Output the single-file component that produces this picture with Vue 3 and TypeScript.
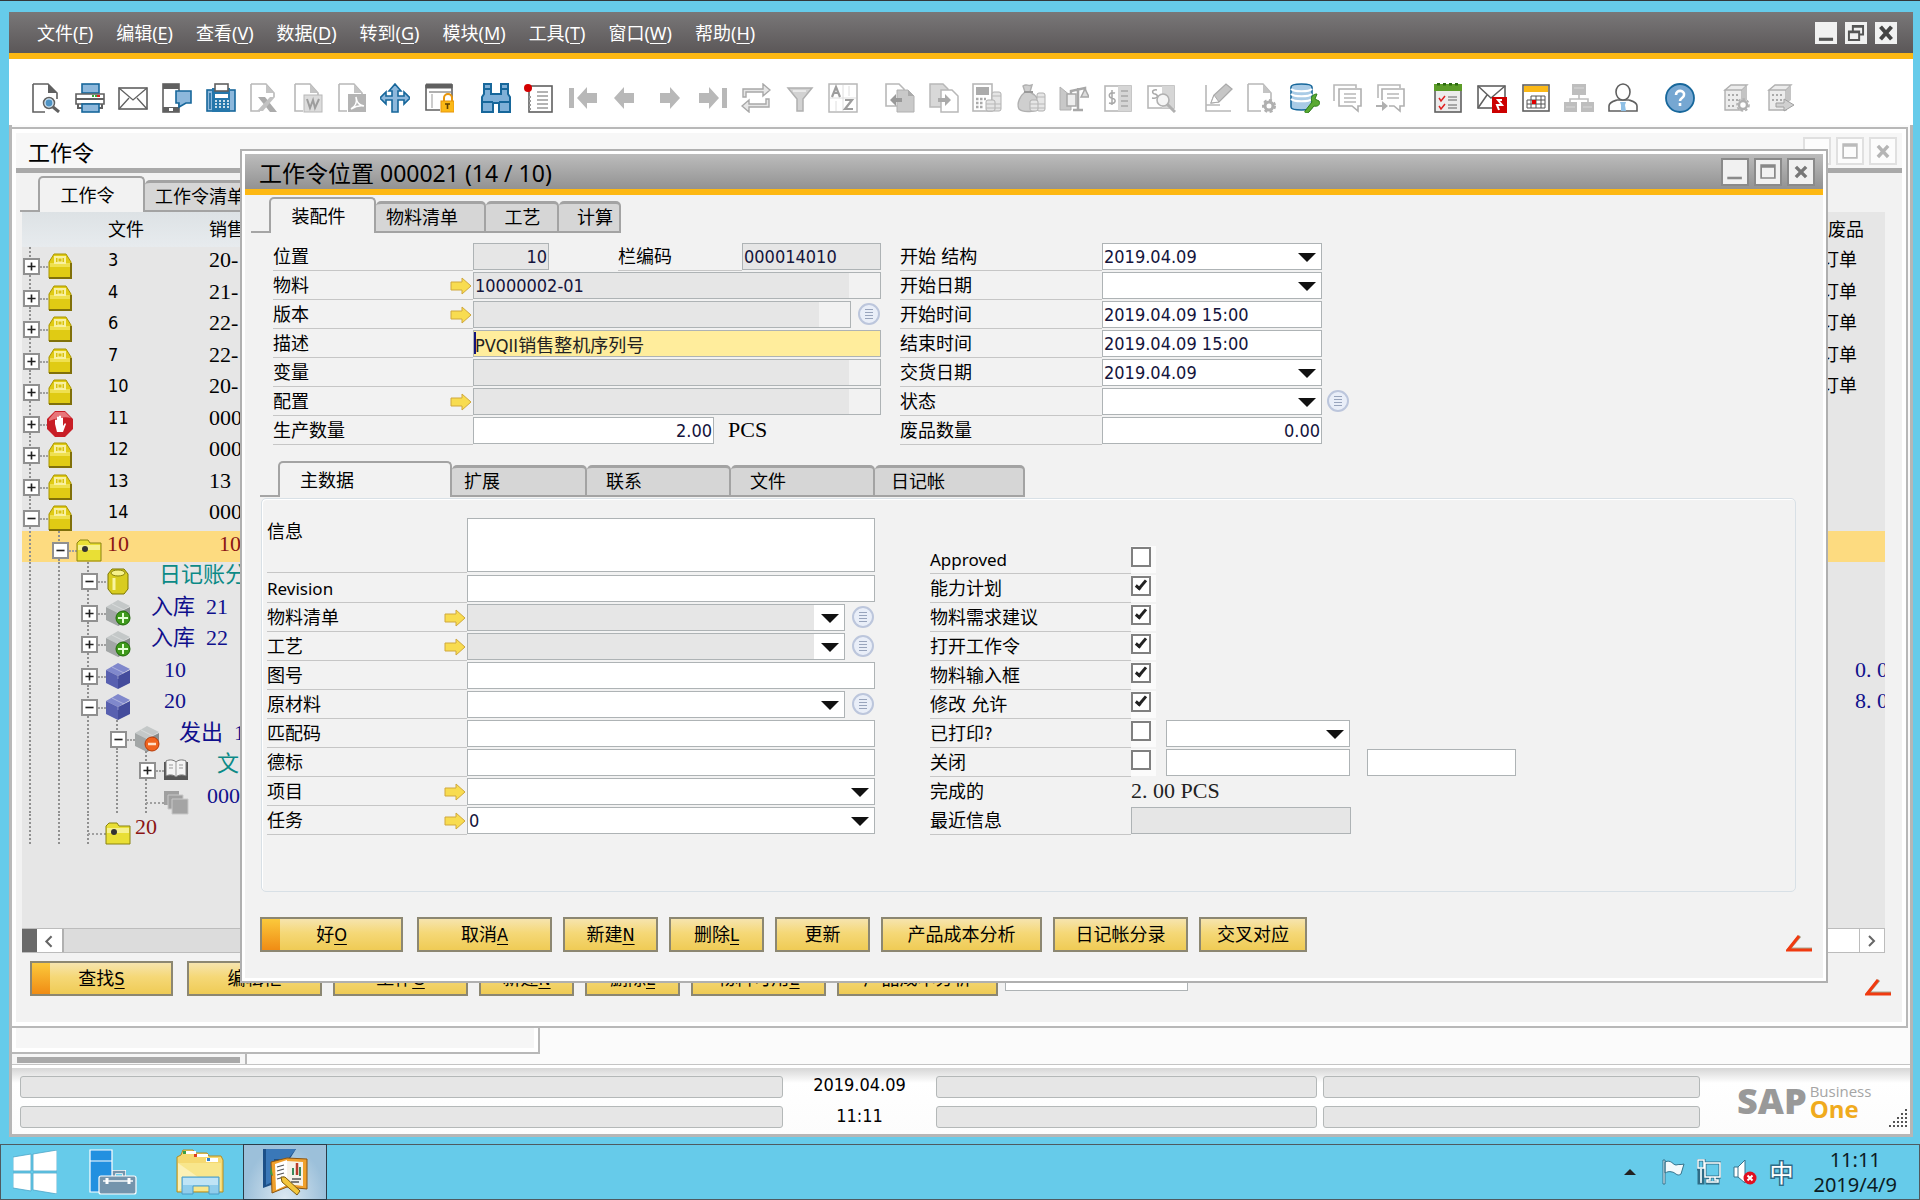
<script setup lang="ts">
interface TreeRow {
  guides: number[]
  level: number
  box: '+' | '-' | ''
  icon: string
  gap: number
  text: string
  tone: string
  second?: string
  shift?: number
  scrap?: string
  scrapTone?: string
}

interface Accel {
  text: string
  key?: string
  width: number
}

const menus = [
  ['文件', 'F'], ['编辑', 'E'], ['查看', 'V'], ['数据', 'D'], ['转到', 'G'],
  ['模块', 'M'], ['工具', 'T'], ['窗口', 'W'], ['帮助', 'H'],
]

const g = 'fill="none" stroke="#b8b8b8" stroke-width="1.6"'
const d = 'fill="#fff" stroke="#606060" stroke-width="1.6"'
const b = 'fill="#8db8dc" stroke="#17679b" stroke-width="1.6"'

const icons: Record<string, string> = {
  preview: `<path d="M2 1h15l9 9v6M2 1v28h12" ${d}/><path d="M17 1v9h9z" fill="#606060"/><circle cx="18" cy="20" r="5.5" fill="#cfe3f3" stroke="#606060" stroke-width="1.5"/><circle cx="18" cy="20" r="3.4" fill="#4e93c4"/><path d="M22 24l6 5" stroke="#606060" stroke-width="3"/>`,
  print: `<rect x="7" y="1" width="17" height="9" ${b}/><path d="M1 11h28v10H1z" ${d}/><path d="M1 16h28M3 21v4h4M27 21v4h-4" fill="none" stroke="#606060" stroke-width="2"/><path d="M17 13h2M20 13h2" stroke="#39a935" stroke-width="2"/><path d="M22 13h3" stroke="#e02020" stroke-width="2"/><rect x="7" y="21" width="17" height="8" ${b}/>`,
  mail: `<rect x="1" y="5" width="28" height="21" ${d}/><path d="M1 5l14 12L29 5M1 26l10-11M29 26L19 15" fill="none" stroke="#606060" stroke-width="1.3"/>`,
  phone: `<rect x="1" y="1" width="16" height="28" ${d}/><path d="M1 1h16v5H1zM1 24h16v5H1z" fill="#606060"/><rect x="7" y="25" width="4" height="3" fill="#fff"/><path d="M14 8h15v12h-5l-7 4v-4h-3z" ${b}/>`,
  fax: `<rect x="1" y="7" width="28" height="21" ${b}/><rect x="6" y="5" width="18" height="24" fill="#2577ab"/><rect x="9" y="1" width="13" height="7" ${d}/><rect x="9" y="11" width="13" height="4" fill="#fff"/><path d="M9 18h14M9 21h14M9 24h14" stroke="#fff" stroke-width="1.6" stroke-dasharray="2 2"/><path d="M4 10v16" stroke="#17679b" stroke-width="1.5"/>`,
  excel: `<path d="M2 1h15l8 9v4M2 1v27h9" ${g}/><path d="M17 1v9h8z" fill="#c4c4c4"/><path d="M9 14h7l12 15h-7z" fill="#ababab"/><path d="M26 14h-5L8 28h6z" fill="#c2c2c2"/>`,
  word: `<path d="M2 1h15l8 9v3M2 1v27h8" ${g}/><path d="M17 1v9h8z" fill="#c4c4c4"/><rect x="11" y="12" width="18" height="17" fill="#dcdcdc" stroke="#b8b8b8"/><path d="M14 16l3 9 3-8 2 8 4-9" fill="none" stroke="#9d9d9d" stroke-width="2"/>`,
  pdf: `<path d="M2 1h15l8 9v3M2 1v27h8" ${g}/><path d="M17 1v9h8z" fill="#c4c4c4"/><rect x="11" y="11" width="18" height="18" fill="#b4b4b4"/><path d="M14 26c5-3 6-8 5-12 1 6 3 8 8 9-5-1-8 0-13 3z" fill="none" stroke="#fff" stroke-width="1.5"/>`,
  move: `<path d="M15 1l6 7h-3v5h6v-4l6 6-6 6v-4h-6v12h-6V17H6v4l-6-6 6-6v4h6V8H9z" ${b}/>`,
  lock: `<path d="M2 2h26v13M2 2v25h14" ${d}/><path d="M2 1h26v4H2zM5 9h22" fill="#606060" stroke="#606060"/><path d="M8 11v14" stroke="#999"/><path d="M20 19v-4a4 4 0 0 1 8 0v4" fill="none" stroke="#e8960c" stroke-width="2"/><rect x="17" y="18" width="13" height="11" fill="#fbb917" stroke="#e8960c"/><path d="M21 21h5M23.500 21v5" stroke="#604000" stroke-width="1.6"/>`,
  find: `<path d="M3 1h7v10h10V1h7v10l2 3v15H18v-9h-6v9H1V14l2-3z" fill="#7fb0d8" stroke="#17679b" stroke-width="2"/><path d="M1 19h11M18 19h11M3 6h7M20 6h7" stroke="#17679b" stroke-width="2"/>`,
  note: `<rect x="5" y="3" width="23" height="26" ${d}/><path d="M13 9h11M13 13h11M13 17h11M13 21h11M13 25h11" stroke="#9a9a9a" stroke-width="1.3"/><path d="M6 13v15" stroke="#999" stroke-width="2" stroke-dasharray="2 2"/><circle cx="4" cy="5" r="4" fill="#d40000"/>`,
  first: `<path d="M1 5h5v20H1zM9 15L19 4v6h10v10H19v6z" fill="#b8b8b8"/>`,
  prev: `<path d="M3 15L13 4v6h10v10H13v6z" fill="#b8b8b8"/>`,
  next: `<path d="M25 15L15 4v6H5v10h10v6z" fill="#b8b8b8"/>`,
  last: `<path d="M24 5h5v20h-5zM21 15L11 4v6H1v10h10v6z" fill="#b8b8b8"/>`,
  refresh: `<path d="M2 14V6h20V1l7 6-7 6V9H5v5zM28 16v8H8v5l-7-6 7-6v4h17v-5z" fill="#e6e6e6" stroke="#a8a8a8" stroke-width="1.4"/>`,
  filter: `<path d="M3 5h24l-9 11v12h-6V16z" fill="#d2d2d2" stroke="#b0b0b0" stroke-width="1.5"/><path d="M8 8h13" stroke="#fff"/>`,
  sort: `<rect x="1" y="1" width="28" height="28" fill="#fff" stroke="#b8b8b8" stroke-width="1.5"/><path d="M15 2v26M2 15h26M21 3v10M8 18v10" stroke="#dedede"/><path d="M4 14L8 4l4 10M6 10h5M17 17h7l-7 9h8" fill="none" stroke="#9d9d9d" stroke-width="2.200"/>`,
  copyfrom: `<path d="M1 1h13l5 5v17H1z" ${g}/><path d="M12 7h11l6 6v16H12z" fill="#c9c9c9" stroke="#b0b0b0"/><path d="M23 7v6h6z" fill="#aaa"/><path d="M5 17l6-6v4h6v4h-6v4z" fill="#999"/>`,
  copyto: `<path d="M1 1h13l5 5v18H1z" fill="#d8d8d8" stroke="#b8b8b8" stroke-width="1.5"/><path d="M12 7h11l6 6v16H12z" fill="#fff" stroke="#b8b8b8" stroke-width="1.5"/><path d="M22 17l-6-6v4H9v4h7v4z" fill="#aaa"/>`,
  calc: `<rect x="1" y="1" width="19" height="27" ${g}/><rect x="4" y="4" width="13" height="8" fill="#ababab"/><path d="M4 16h10M4 20h8M4 24h8" stroke="#aaa" stroke-width="2.500" stroke-dasharray="2.500 1.500"/><rect x="20" y="9" width="9" height="19" rx="2" fill="#e4e4e4" stroke="#b0b0b0"/><rect x="14" y="17" width="9" height="11" rx="2" fill="#e4e4e4" stroke="#b0b0b0"/><path d="M20 13h9M14 21h15M14 25h15" stroke="#b8b8b8"/>`,
  bag: `<path d="M7 3c4-3 5 1 9-1l-2 7c6 3 11 9 9 16-2 4-16 5-20 1C0 20 5 12 9 9z" fill="#cfcfcf" stroke="#b0b0b0" stroke-width="1.4"/><path d="M8 9h9" stroke="#999" stroke-width="2"/><rect x="21" y="10" width="8" height="18" rx="2" fill="#e6e6e6" stroke="#b0b0b0"/><rect x="14" y="17" width="8" height="11" rx="2" fill="#e6e6e6" stroke="#b0b0b0"/><path d="M21 14h8M14 21h15M14 25h15" stroke="#b8b8b8"/>`,
  scale: `<path d="M1 4l11 9v14H1z" fill="#c8c8c8" stroke="#b0b0b0"/><rect x="8" y="11" width="9" height="12" fill="#eee" stroke="#a8a8a8" stroke-width="1.5"/><path d="M19 5v22M14 27h10M12 11V8l14-3v6" fill="none" stroke="#a8a8a8" stroke-width="2.500"/><path d="M22 14l4-8 4 8z" fill="#ddd" stroke="#a8a8a8" stroke-width="1.500"/>`,
  ledger: `<rect x="2" y="3" width="26" height="25" ${g}/><rect x="15" y="3" width="13" height="25" fill="#d6d6d6"/><path d="M18 8h7M18 13h7M18 18h7M18 23h7" stroke="#a8a8a8" stroke-width="1.5"/><path d="M12 10c-7-2-7 5-3 5 5 1 4 7-3 5M9 7v15" fill="none" stroke="#a8a8a8" stroke-width="1.5"/>`,
  lookup: `<rect x="2" y="3" width="26" height="22" ${g}/><rect x="16" y="3" width="12" height="22" fill="#d6d6d6"/><path d="M11 7c-6-1-5 4-2 4 4 1 3 5-3 4" fill="none" stroke="#a8a8a8" stroke-width="1.5"/><circle cx="17" cy="17" r="6" fill="#f5f5f5" stroke="#b0b0b0" stroke-width="1.6"/><path d="M21 21l8 8" stroke="#b0b0b0" stroke-width="3"/>`,
  pencil: `<path d="M3 2v26h25M3 22h14" ${g}/><path d="M8 20l3-8L23 1l6 5-13 13z" fill="#c6c6c6" stroke="#aaa" stroke-width="1.3"/><path d="M8 20l3-8 5 7z" fill="#fff" stroke="#aaa"/>`,
  docgear: `<path d="M2 1h15l8 9v8M2 1v27h13" ${g}/><path d="M17 1v9h8z" fill="#c4c4c4"/><circle cx="23" cy="23" r="4" fill="#fff" stroke="#b0b0b0" stroke-width="3"/><circle cx="23" cy="23" r="6" fill="none" stroke="#b0b0b0" stroke-width="2" stroke-dasharray="3 2.500"/>`,
  db: `<path d="M1 4c0-4 21-4 21 0v20c0 4-21 4-21 0z" fill="#a9cbe6" stroke="#17679b" stroke-width="1.6"/><path d="M1 6c3 3 18 3 21 0M1 11c3 3 18 3 21 0M1 16c3 3 18 3 21 0" fill="none" stroke="#fff" stroke-width="2"/><path d="M15 28l7-9c-2-5 1-8 5-8l-2 5 4 2c2 4-2 6-5 5l-5 6c-2 2-5 1-4-1z" fill="#5aaa32" stroke="#2e7d1a"/>`,
  chat: `<path d="M1 18V2h22v3" ${g}/><path d="M6 6h22v17h-3v5l-6-5H6z" fill="#fff" stroke="#b0b0b0" stroke-width="1.6"/><path d="M11 11h12M11 15h12M11 19h12" stroke="#b8b8b8" stroke-width="1.4"/>`,
  chatgo: `<path d="M2 15V2h22v3" ${g}/><path d="M6 17V6h22v17h-4v5l-6-5h-5" fill="#fff" stroke="#b0b0b0" stroke-width="1.6"/><path d="M11 11h12M11 15h12" stroke="#b8b8b8" stroke-width="1.4"/><path d="M0 22h6v-4l6 5-6 5v-4H0z" fill="#b0b0b0"/>`,
  tasks: `<rect x="2" y="3" width="26" height="26" fill="#ececec" stroke="#606060" stroke-width="1.6"/><path d="M1 1h28v7H1z" fill="#5c9c28"/><path d="M4 1h24" stroke="#2c6a10" stroke-width="3" stroke-dasharray="3 3"/><path d="M6 15l2 3 4-5M6 23l2 3 4-5" fill="none" stroke="#e02020" stroke-width="1.5"/><path d="M15 14h9M15 17h9M15 22h9M15 25h9" stroke="#909090" stroke-width="1.3"/>`,
  mailred: `<rect x="1" y="3" width="27" height="22" ${d}/><path d="M1 3l13 12L28 3M1 25l9-13" fill="none" stroke="#606060" stroke-width="1.5"/><rect x="15" y="14" width="15" height="16" fill="#cc0000"/><path d="M25 17h-4l4 5h-5l2 5" fill="none" stroke="#fff" stroke-width="2"/>`,
  calendar: `<rect x="2" y="2" width="26" height="26" ${d}/><path d="M3 3h24v6H3z" fill="#fbb917"/><path d="M6 17h18M6 21h18M6 25h18M10 13v12M15 13v12M20 13v12M24 13v12M6 17v8M10 13h14" stroke="#555" fill="none"/><rect x="11" y="17" width="4" height="4" fill="#e00000"/>`,
  org: `<path d="M8 1h14v11H8zM0 19h13v10H0zM17 19h13v10H17z" fill="#bebebe"/><path d="M15 12v4M6 20v-4h18v4" fill="none" stroke="#bebebe" stroke-width="1.6"/><path d="M10 5h10M2 24h9M19 24h9" stroke="#d8d8d8"/>`,
  user: `<path d="M1 28v-5c0-4 5-5 8-6h12c3 1 8 2 8 6v5z" ${d}/><ellipse cx="15" cy="9" rx="7" ry="8" ${d}/><path d="M12 19h6l-1 3 1 6h-5l0-6z" fill="#8fc0e6"/>`,
  help: `<circle cx="15" cy="15" r="14" fill="#76a7d2" stroke="#17679b" stroke-width="1.8"/><path d="M11 12c0-6 9-5 8 0 0 3-4 3-4 6M15 20v3" fill="none" stroke="#fff" stroke-width="2.600"/>`,
  server: `<path d="M3 7l6-5h16l-5 5zM3 7h17v20H3z" fill="#ececec" stroke="#b0b0b0" stroke-width="1.4"/><path d="M20 7l5-5v15l-5 4z" fill="#c4c4c4"/><path d="M6 12h12M6 17h12M6 23h8" stroke="#aaa" stroke-width="2" stroke-dasharray="2 2"/><circle cx="21" cy="22" r="4" fill="#fff" stroke="#b0b0b0" stroke-width="2.500"/><circle cx="21" cy="22" r="6" fill="none" stroke="#b0b0b0" stroke-width="1.600" stroke-dasharray="2.500 2"/>`,
  servergo: `<path d="M3 7l6-5h16l-5 5zM3 7h17v20H3z" fill="#ececec" stroke="#b0b0b0" stroke-width="1.4"/><path d="M20 7l5-5v15l-5 4z" fill="#c4c4c4"/><path d="M6 12h12M6 17h12" stroke="#aaa" stroke-width="2" stroke-dasharray="2 2"/><path d="M10 20h8v-4l10 6-10 6v-4h-8z" fill="#d0d0d0" stroke="#a0a0a0"/>`,
}

const toolbar = [
  { width: 423, items: ['preview', 'print', 'mail', 'phone', 'fax', 'excel', 'word', 'pdf', 'move', 'lock'] },
  { width: 377, items: ['find', 'note', 'first', 'prev', 'next', 'last', 'refresh', 'filter', 'sort'] },
  { width: 291, items: ['copyfrom', 'copyto', 'calc', 'bag', 'scale', 'ledger', 'lookup'] },
  { width: 203, items: ['pencil', 'docgear', 'db', 'chat', 'chatgo'] },
  { width: 205, items: ['tasks', 'mailred', 'calendar', 'org', 'user'] },
  { width: 30, items: ['help'] },
  { width: 74, items: ['server', 'servergo'] },
]

const cube = (top: string, left: string, right: string) =>
  `<path d="M12-1l12 6-12 7L0 6z" fill="${top}"/><path d="M0 6l12 6v13L0 19z" fill="${left}"/><path d="M24 6l-12 6v13l12-6z" fill="${right}"/><path d="M6 3l12 6M12 12v3" stroke="#fff" stroke-opacity=".35" fill="none"/>`

const treeIcons: Record<string, string> = {
  lock: `<path d="M1 8l5-8h12l5 8v16H1z" fill="#e0cb14" stroke="#a89400" stroke-width="1"/><path d="M2 9h20v4H2z" fill="#efe050"/><path d="M7 9V3h10v6z" fill="#d8c210" stroke="#f9f1a0" stroke-width="2"/><rect x="10" y="4" width="4" height="4" fill="none" stroke="#f9f1a0"/><path d="M1 24h22V9" fill="none" stroke="#80700a" stroke-width="2"/>`,
  stop: `<path d="M7-1h10l8 8v10l-8 8H7l-8-8V7z" fill="#c81e26"/><path d="M7 0h10l6 6c-6-2-14 0-22 3V7z" fill="#e8767a"/><path d="M7 12V8q1-1 2 0V5q1-1 2 0V4q1-1 2 0v2q1-1 2 0v8l2-3 1 1-3 8H9z" fill="#fff"/>`,
  folder: `<path d="M0 5l3-3h8l2 3h11v18H0z" fill="#e9df35" stroke="#8a8310"/><path d="M1 7h22v5H1z" fill="#f6f190"/><circle cx="8" cy="11" r="3" fill="#333"/>`,
  cyl: `<path d="M2 5l4-5h12l4 5v15l-4 5H6l-4-5z" fill="#d8cc20" stroke="#7c7600"/><ellipse cx="12" cy="4" rx="7" ry="3" fill="#f7f28c" stroke="#8a8310"/><path d="M8 9v12" stroke="#f9f4a0" stroke-width="3"/>`,
  add: cube('#c4c8c8', '#a2a6a6', '#8a8e8e') + `<circle cx="17" cy="17" r="7" fill="#3f9a1c" stroke="#1f6a08"/><path d="M17 12v10M12 17h10" stroke="#e4ffd4" stroke-width="2"/>`,
  minus: cube('#c4c8c8', '#a2a6a6', '#8a8e8e') + `<circle cx="17" cy="17" r="7" fill="#f0641e" stroke="#b83c0a"/><path d="M13 17h8" stroke="#ffe0c8" stroke-width="2.500"/>`,
  cube: cube('#8088cc', '#5860b0', '#444c9c'),
  book: `<path d="M0 4h24v18H0z" fill="#555"/><path d="M2 3c4-2 8-1 10 1 2-2 6-3 10-1v15c-4-2-8-1-10 1-2-2-6-3-10-1z" fill="#f4f4f4" stroke="#777"/><path d="M12 4v15M5 7h4M5 10h4M15 7h4M15 10h4" stroke="#999"/>`,
  stack: `<path d="M0 1h15v14H0z" fill="#a0a0a0"/><path d="M4 5h15v14H4z" fill="#a0a0a0" stroke="#c8c8c8"/><path d="M8 9h16v15H8z" fill="#a4a4a4" stroke="#c8c8c8"/>`,
}

const order = (text: string, second: string, extra: Partial<TreeRow> = {}): TreeRow =>
  ({ guides: [], level: 0, box: '+', icon: 'lock', gap: 36, text, tone: 'plain', second, ...extra })

const scrap = { scrap: '订单', scrapTone: 'plain' }

const tree: TreeRow[] = [
  order('3', '20-', scrap),
  order('4', '21-', scrap),
  order('6', '22-', scrap),
  order('7', '22-', scrap),
  order('10', '20-', scrap),
  order('11', '000', { icon: 'stop' }),
  order('12', '000'),
  order('13', '13'),
  order('14', '000', { box: '-' }),
  { guides: [0], level: 1, box: '-', icon: 'folder', gap: 6, text: '10', tone: 'red', second: '10', shift: 10 },
  { guides: [0, 1], level: 2, box: '-', icon: 'cyl', gap: 29, text: '日记账分', tone: 'teal' },
  { guides: [0, 1], level: 2, box: '+', icon: 'add', gap: 21, text: '入库  21', tone: 'navy' },
  { guides: [0, 1], level: 2, box: '+', icon: 'add', gap: 21, text: '入库  22', tone: 'navy' },
  { guides: [0, 1], level: 2, box: '+', icon: 'cube', gap: 34, text: '10', tone: 'navy', scrap: '0. 0', scrapTone: 'navy' },
  { guides: [0, 1], level: 2, box: '-', icon: 'cube', gap: 34, text: '20', tone: 'navy', scrap: '8. 0', scrapTone: 'navy' },
  { guides: [0, 1, 2], level: 3, box: '-', icon: 'minus', gap: 20, text: '发出  1', tone: 'navy' },
  { guides: [0, 1, 2, 3], level: 4, box: '+', icon: 'book', gap: 29, text: '文', tone: 'teal' },
  { guides: [0, 1, 2, 3], level: 4, box: '', icon: 'stack', gap: 19, text: '000', tone: 'navy' },
  { guides: [0, 1], level: 2, box: '', icon: 'folder', gap: 5, text: '20', tone: 'red' },
]

const backButtons: Accel[] = [
  { text: '查找', key: 'S', width: 143 }, { text: '编辑柜', width: 135 }, { text: '工作', key: 'G', width: 135 },
  { text: '新建', key: 'N', width: 95 }, { text: '删除', key: 'L', width: 95 }, { text: '物料可用', key: 'E', width: 135 },
  { text: '产品成本分析', width: 161 },
]

const okButtons: Accel[] = [
  { text: '好', key: 'O', width: 143 }, { text: '取消', key: 'A', width: 135 }, { text: '新建', key: 'N', width: 95 },
  { text: '删除', key: 'L', width: 95 }, { text: '更新', width: 95 }, { text: '产品成本分析', width: 161 },
  { text: '日记帐分录', width: 135 }, { text: '交叉对应', width: 108 },
]

const scheduleRows = [
  { id: 'sched-start', label: '开始 结构', value: '2019.04.09', kind: 'select' },
  { id: 'start-date', label: '开始日期', value: '', kind: 'select' },
  { id: 'start-time', label: '开始时间', value: '2019.04.09 15:00', kind: 'text' },
  { id: 'end-time', label: '结束时间', value: '2019.04.09 15:00', kind: 'text' },
  { id: 'due-date', label: '交货日期', value: '2019.04.09', kind: 'select' },
  { id: 'state', label: '状态', value: '', kind: 'select', list: true },
  { id: 'scrap-qty', label: '废品数量', value: '0.00', kind: 'number' },
]

const masterRows = [
  { id: 'revision', label: 'Revision', kind: 'text', value: '' },
  { id: 'bom', label: '物料清单', kind: 'lookup', value: '', link: true, gray: true },
  { id: 'routing', label: '工艺', kind: 'lookup', value: '', link: true, gray: true },
  { id: 'drawing', label: '图号', kind: 'text', value: '' },
  { id: 'raw', label: '原材料', kind: 'lookup', value: '' },
  { id: 'match', label: '匹配码', kind: 'text', value: '' },
  { id: 'din', label: '德标', kind: 'text', value: '' },
  { id: 'project', label: '项目', kind: 'select', value: '', link: true },
  { id: 'task', label: '任务', kind: 'select', value: '0', link: true },
]

const flags = [
  { id: 'approved', label: 'Approved', on: false },
  { id: 'capacity', label: '能力计划', on: true },
  { id: 'mrp', label: '物料需求建议', on: true },
  { id: 'open', label: '打开工作令', on: true },
  { id: 'issue', label: '物料输入框', on: true },
  { id: 'change', label: '修改 允许', on: true },
  { id: 'printed', label: '已打印?', on: false },
  { id: 'closed', label: '关闭', on: false },
]

const arrowPath = 'M1 5h11V1l9 8-9 8v-4H1z'
const isLatin = (s: string) => /^[A-Za-z]+$/.test(s)
</script>

<template>
  <div class="desktop">
    <div class="app">
      <nav class="menubar">
        <button v-for="m in menus" :key="m[1]" type="button" class="menu">{{ m[0] }}(<u>{{ m[1] }}</u>)</button>
        <div class="sys small">
          <button type="button" aria-label="最小化"><svg viewBox="0 0 28 28"><path d="M5 22h18" stroke="#555" stroke-width="4" /></svg></button>
          <button type="button" aria-label="还原"><svg viewBox="0 0 28 28"><path d="M5 12h13v11H5zM5 13h13M10 11V5h13v11h-4M10 6h13" fill="none" stroke="#555" stroke-width="2.500" /></svg></button>
          <button type="button" aria-label="关闭"><svg viewBox="0 0 28 28"><path d="M7 6l14 16M21 6L7 22" stroke="#444" stroke-width="5" /></svg></button>
        </div>
      </nav>

      <div class="toolbar">
        <div v-for="(grp, i) in toolbar" :key="i" class="tool-group" :style="{ width: grp.width + 'px' }">
          <button v-for="name in grp.items" :key="name" type="button" :aria-label="name">
            <svg viewBox="0 0 30 30" v-html="icons[name]"></svg>
          </button>
        </div>
      </div>

      <div class="frame">
        <main class="workspace">
          <section class="win back">
            <header class="back-title">
              <h2>工作令</h2>
              <div class="sys faded">
                <button type="button" aria-label="最小化"></button>
                <button type="button" aria-label="最大化"><svg viewBox="0 0 28 28"><path d="M6 6h16v16H6zM6 8h16" fill="none" stroke="#bbb" stroke-width="2" /></svg></button>
                <button type="button" aria-label="关闭"><svg viewBox="0 0 28 28"><path d="M8 8l12 13M20 8L8 21" stroke="#b5b5b5" stroke-width="4" /></svg></button>
              </div>
            </header>
            <div class="tabs back-tabs">
              <span class="lead"></span>
              <button type="button" class="tab on w107">工作令</button>
              <button type="button" class="tab w110">工作令清单</button>
            </div>
            <div class="tree-area">
              <table class="tree">
                <thead>
                  <tr><th class="c-tree">文件</th><th>销售</th><th class="c-scrap">废品</th></tr>
                </thead>
                <tbody>
                  <tr v-for="(r, i) in tree" :key="i" :class="{ hit: i === 9 }">
                    <td class="c-tree">
                      <div class="node">
                        <span v-for="n in r.level" :key="n" class="guide" :class="{ line: r.guides.includes(n - 1) }"></span>
                        <span class="twig" :class="{ bare: !r.box }">
                          <button v-if="r.box" type="button" class="box" :aria-label="r.box">
                            <svg viewBox="0 0 16 16"><path :d="r.box === '+' ? 'M3 8h10M8 3v10' : 'M3 8h10'" stroke="#222" stroke-width="2" /></svg>
                          </button>
                        </span>
                        <svg class="ticon" viewBox="0 0 24 24" v-html="treeIcons[r.icon]"></svg>
                        <span class="name" :class="[r.tone, { sans: r.level === 0 }]" :style="{ marginLeft: r.gap + 'px' }">{{ r.text }}</span>
                      </div>
                    </td>
                    <td><span class="name" :class="r.tone" :style="{ marginLeft: (r.shift || 0) + 'px' }">{{ r.second }}</span></td>
                    <td class="c-scrap"><span class="name" :class="[r.scrapTone, { sans: r.scrapTone === 'plain' }]">{{ r.scrap }}</span></td>
                  </tr>
                </tbody>
              </table>
            </div>
            <div class="hscroll">
              <span class="grip"></span>
              <button type="button" aria-label="向左"><svg viewBox="0 0 24 24"><path d="M14 7l-5 5 5 5" fill="none" stroke="#666" stroke-width="2" /></svg></button>
              <span class="thumb"></span>
              <span class="rest"></span>
              <button type="button" aria-label="向右"><svg viewBox="0 0 24 24"><path d="M9 7l5 5-5 5" fill="none" stroke="#666" stroke-width="2" /></svg></button>
            </div>
            <footer class="bar back-bar">
              <button v-for="(x, i) in backButtons" :key="i" type="button" class="gold" :class="{ prime: i === 0 }" :style="{ width: x.width + 'px' }">{{ x.text }}<u v-if="x.key">{{ x.key }}</u></button>
              <input class="field quick" type="text" aria-label="查找">
              <svg class="angle" viewBox="0 0 27 17"><path d="M14 1L3 14h23" fill="none" stroke="#aaa890" stroke-width="3" /><path d="M13 1L2 15h24" fill="none" stroke="#f03a10" stroke-width="3" /></svg>
            </footer>
          </section>

          <div class="peek peek-a"></div>
          <div class="peek peek-b"><span></span></div>

          <section class="win front">
            <header class="front-title">
              <h1>工作令位置 000021 (14 / 10)</h1>
              <div class="sys">
                <button type="button" aria-label="最小化"><svg viewBox="0 0 28 28"><path d="M5 21h17" stroke="#8a8a8a" stroke-width="3" /></svg></button>
                <button type="button" aria-label="最大化"><svg viewBox="0 0 28 28"><path d="M6 6h16v15H6zM6 8h16" fill="none" stroke="#888" stroke-width="2" /></svg></button>
                <button type="button" aria-label="关闭"><svg viewBox="0 0 28 28"><path d="M8 8l12 12M20 8L8 20" stroke="#777" stroke-width="4" /></svg></button>
              </div>
            </header>
            <div class="tabs top-tabs">
              <span class="lead"></span>
              <button type="button" class="tab on w107">装配件</button>
              <button type="button" class="tab w110">物料清单</button>
              <button type="button" class="tab w73">工艺</button>
              <button type="button" class="tab w62">计算</button>
            </div>

            <form class="head-form" @submit.prevent>
              <div class="col-left">
                <div class="row">
                  <label for="pos">位置</label>
                  <input id="pos" class="field gray num pos" value="10" readonly>
                  <label for="code" class="code-label">栏编码</label>
                  <input id="code" class="field gray wide" value="000014010" readonly>
                </div>
                <div class="row">
                  <label for="item">物料<svg class="link" viewBox="0 0 22 18"><path :d="arrowPath" /></svg></label>
                  <input id="item" class="field split wide" value="10000002-01" readonly>
                </div>
                <div class="row">
                  <label for="ver">版本<svg class="link" viewBox="0 0 22 18"><path :d="arrowPath" /></svg></label>
                  <input id="ver" class="field split wide" readonly>
                  <button type="button" class="list" aria-label="版本列表"></button>
                </div>
                <div class="row">
                  <label for="desc">描述</label>
                  <span class="caret"><input id="desc" class="field active" value="PVQII销售整机序列号"></span>
                </div>
                <div class="row">
                  <label for="variant">变量</label>
                  <input id="variant" class="field split wide" readonly>
                </div>
                <div class="row">
                  <label for="config">配置<svg class="link" viewBox="0 0 22 18"><path :d="arrowPath" /></svg></label>
                  <input id="config" class="field split wide" readonly>
                </div>
                <div class="row">
                  <label for="qty">生产数量</label>
                  <input id="qty" class="field num qty" value="2.00">
                  <span class="name unit">PCS</span>
                </div>
              </div>
              <div class="col-right">
                <div v-for="r in scheduleRows" :key="r.id" class="row">
                  <label :for="r.id">{{ r.label }}</label>
                  <span v-if="r.kind === 'select'" class="combo">
                    <select :id="r.id" class="field"><option>{{ r.value }}</option></select>
                  </span>
                  <input v-else :id="r.id" class="field" :class="{ num: r.kind === 'number' }" :value="r.value">
                  <button v-if="r.list" type="button" class="list near" aria-label="列表"></button>
                </div>
              </div>
            </form>

            <div class="tabs low-tabs">
              <span class="lead"></span>
              <button type="button" class="tab on w174">主数据</button>
              <button type="button" class="tab w135">扩展</button>
              <button type="button" class="tab w144">联系</button>
              <button type="button" class="tab w144">文件</button>
              <button type="button" class="tab w150">日记帐</button>
            </div>

            <form class="panel" @submit.prevent>
              <div class="col-left">
                <div class="row tall">
                  <label for="info">信息</label>
                  <textarea id="info" class="field"></textarea>
                </div>
                <div v-for="r in masterRows" :key="r.id" class="row">
                  <label :for="r.id" :class="{ latin: isLatin(r.label) }">{{ r.label }}<svg v-if="r.link" class="link" viewBox="0 0 22 18"><path :d="arrowPath" /></svg></label>
                  <input v-if="r.kind === 'text'" :id="r.id" class="field wide" :value="r.value">
                  <span v-else class="combo" :class="{ shade: r.gray }">
                    <select :id="r.id" class="field"><option>{{ r.value }}</option></select>
                  </span>
                  <button v-if="r.kind === 'lookup'" type="button" class="list" aria-label="列表"></button>
                </div>
              </div>
              <div class="flags">
                <div v-for="f in flags" :key="f.id" class="row">
                  <label :for="f.id" :class="{ latin: isLatin(f.label) }">{{ f.label }}</label>
                  <span class="tick"><input :id="f.id" type="checkbox" :checked="f.on"></span>
                  <span v-if="f.id === 'printed'" class="combo w184">
                    <select class="field" aria-label="打印"><option></option></select>
                  </span>
                  <template v-if="f.id === 'closed'">
                    <input class="field w184" aria-label="关闭日期">
                    <input class="field w149" aria-label="关闭人">
                  </template>
                </div>
                <div class="row">
                  <span class="plain-label">完成的</span>
                  <span class="name done">2. 00  PCS</span>
                </div>
                <div class="row">
                  <label for="recent">最近信息</label>
                  <input id="recent" class="field gray recent" readonly>
                </div>
              </div>
            </form>

            <footer class="bar front-bar">
              <button v-for="(x, i) in okButtons" :key="i" type="button" class="gold" :class="{ prime: i === 0 }" :style="{ width: x.width + 'px' }">{{ x.text }}<u v-if="x.key">{{ x.key }}</u></button>
              <svg class="angle" viewBox="0 0 27 17"><path d="M14 1L3 14h23" fill="none" stroke="#aaa890" stroke-width="3" /><path d="M13 1L2 15h24" fill="none" stroke="#f03a10" stroke-width="3" /></svg>
            </footer>
          </section>
        </main>

        <footer class="status">
          <div class="cells"><i></i><i></i></div>
          <div class="clock"><span>2019.04.09</span><span>11:11</span></div>
          <div class="cells"><i></i><i></i></div>
          <div class="cells"><i></i><i></i></div>
          <div class="brand">
            <strong>SAP</strong>
            <span class="sub"><span>Business</span><b>One</b></span>
            <svg class="resize" viewBox="0 0 20 20"><path d="M2 18h18M6 14h14M10 10h10M14 6h6M18 2h2" stroke="#555" stroke-width="2" stroke-dasharray="2 2" /></svg>
          </div>
        </footer>
      </div>
    </div>

    <footer class="taskbar">
      <button type="button" class="task start" aria-label="开始">
        <svg viewBox="0 0 44 44"><path d="M0 7l18-3v17H0zM20 4l24-4v21H20zM0 23h18v18L0 38zM20 23h24v21l-24-4z" fill="#fff" stroke="#4aa5c8" stroke-width=".8" /></svg>
      </button>
      <button type="button" class="task server" aria-label="服务器管理器">
        <svg viewBox="0 0 48 46"><path d="M1 1h22v42H1zM1 12h22" fill="#2290e0" stroke="#fff" stroke-width="1.2" /><path d="M25 28v-5h10v5" fill="none" stroke="#fff" stroke-width="4" /><path d="M25 28v-5h10v5" fill="none" stroke="#7494ac" stroke-width="2.500" /><rect x="10" y="27" width="37" height="18" rx="2" fill="#7494ac" stroke="#fff" stroke-width="1.2" /><path d="M14 32h30" stroke="#fff" stroke-width="1.4" /><path d="M18 29v6M40 29v6" stroke="#fff" stroke-width="3" /></svg>
      </button>
      <button type="button" class="task explorer" aria-label="文件资源管理器">
        <svg viewBox="0 0 48 46"><path d="M5 6l2-5h10l2 3h12l2 3h12l2 4v32H1V8z" fill="#f5d971" stroke="#b48c20" /><path d="M10 2h10v3H10zM20 5h12v3H20zM30 9h12v4H30z" fill="#fff" /><path d="M7 2h3v3H7z" fill="#3aa044" /><path d="M18 5h3v3h-3z" fill="#e04020" /><path d="M31 9h3v3h-3z" fill="#2a80d0" /><path d="M2 14h43v28H2z" fill="#f8e68c" /><path d="M2 14l20 14L2 42z" fill="#fffbe0" opacity=".5" /><path d="M6 28h37v17H33v-8H17v8H6z" fill="#8fcdec" stroke="#4a9cc8" /><path d="M7 29h35v7H7z" fill="#bfe4f6" /></svg>
      </button>
      <button type="button" class="task current" aria-label="SAP Business One">
        <svg viewBox="0 0 46 48"><path d="M1 1h33L12 36 1 40z" fill="#1c5088" /><path d="M4 1h30l-8 10H12v22l-8 4z" fill="#3a78b8" /><path d="M9 14l16-4 20 1v30l-20-2-15 6z" fill="#f0a02c" stroke="#8a5410" /><path d="M13 16l12-4v25l-11 5z" fill="#fff" /><path d="M25 13l16 1v24l-16-2z" fill="#f6f2ea" /><path d="M15 19l7-2M15 23l7-2M15 27l7-2M15 31l7-2M30 31h9M29 34h8" stroke="#555" stroke-width="1.3" /><path d="M31 20v7M38 19v9" stroke="#3a8a5c" stroke-width="2" /><path d="M35 15v12" stroke="#b83c2c" stroke-width="2.500" /><path d="M19 29l4 0 15 14-3 4-15-13z" fill="#f4c63c" stroke="#7c5a10" /><path d="M9 18l-1 8 3 2z" fill="#3c9a48" /></svg>
      </button>
      <div class="tray">
        <svg class="up" viewBox="0 0 12 6"><path d="M6 0l6 6H0z" fill="#222" /></svg>
        <svg viewBox="0 0 24 26"><path d="M2 1h2v24H2zM4 3c6-3 8 3 11 3 3-1 5 0 8-1l-3 10c-4 3-6-2-9-2-3-1-5 0-7 1z" fill="#f4fafc" stroke="#35738c" /></svg>
        <svg viewBox="0 0 24 26"><path d="M8 4h15v14H8zM13 18h5v3h3v3H10v-3h3zM1 1h6v9H6v14H2V10H1z" fill="none" stroke="#2f6c86" stroke-width="3" /><path d="M8 4h15v14H8zM13 18h5v3h3v2H10v-2h3zM1 1h6v8H1zM4 10v14" fill="none" stroke="#fff" stroke-width="1.5" /></svg>
        <svg viewBox="0 0 24 26"><path d="M1 8h4l7-7v23l-7-6H1z" fill="#fff" stroke="#35738c" /><path d="M5 8v10" stroke="#35738c" /><circle cx="17" cy="19" r="6.500" fill="#e01020" /><path d="M14.500 16.500l5 5M19.500 16.500l-5 5" stroke="#fff" stroke-width="2" /></svg>
        <span class="ime">中</span>
        <div class="now"><span>11:11</span><span>2019/4/9</span></div>
      </div>
    </footer>
  </div>
</template>

<style>
body {
  margin: 0;
  background: #66cbea;
}
</style>

<style scoped>
.desktop {
  --ui: "DejaVu Sans Condensed", "Noto Sans CJK SC", sans-serif;
  --humanist: "Noto Sans", "Noto Sans CJK SC", sans-serif;
  --song: "Liberation Serif", "Noto Sans CJK SC", serif;
  display: flex;
  flex-direction: column;
  box-sizing: border-box;
  min-height: 100vh;
  border-top: 1px solid #33363a;
  background: #66cbea;
  color: #000;
  font: 18px/24px var(--ui);
  white-space: nowrap;
  overflow: hidden;
}
.desktop *, .desktop *::before, .desktop *::after { box-sizing: border-box; }
button { margin: 0; padding: 0; border: 0; background: none; color: inherit; font: inherit; }
h1, h2 { margin: 0; padding-top: 3px; font: 400 22px/30px var(--humanist); }
h1 { font-size: 23px; }
svg { display: block; }

.app { display: flex; flex: 1; flex-direction: column; margin: 11px 7px 7px 9px; background: #fff; }
.menubar {
  display: flex; align-items: center; gap: 23px; height: 47px; padding: 0 16px 0 28px;
  border-bottom: 6px solid #fdb813; background: linear-gradient(#797778, #5b5758);
  color: #fff; font-family: var(--humanist);
}
.menu u { text-underline-offset: 3px; }
.sys { display: flex; gap: 5px; margin-left: auto; }
.sys button { width: 28px; height: 28px; border: 2px solid #8a8a8a; background: #f1f1f1; }
.sys svg { width: 100%; height: 100%; }
.sys.small { gap: 8px; }
.sys.small button { width: 22px; height: 22px; border: 0; }
.sys.faded button { border-color: #e0e0e0; background: #fcfcfc; }

.toolbar { display: flex; gap: 27px; padding: 24px 22px 12px; }
.tool-group { display: flex; justify-content: space-between; }
.tool-group svg { width: 30px; height: 30px; }

.frame { display: flex; flex: 1; flex-direction: column; border: solid #b6b6b6; border-width: 0 3px 3px; }
.workspace { position: relative; flex: 1; padding: 4px 4px 36px 0; background: #fbfbfb; }
.win { background: #f2f2f2; }
.back {
  position: relative; z-index: 2; padding-bottom: 26px; border: 4px solid #fff;
  box-shadow: 0 0 0 2px #b8b8b8; overflow: hidden;
}
.back-title {
  display: flex; align-items: center; height: 40px; padding: 0 5px 0 12px;
  border-bottom: 5px solid #a9a9a9; background: #f7f7f7;
}
.tabs { display: flex; align-items: flex-end; height: 36px; }
.lead { align-self: stretch; width: 18px; border-bottom: 2px solid #a5a5a5; }
.tab {
  height: 32px; border: solid #a3a3a3; border-width: 3px 2px 2px 0; border-radius: 5px 5px 0 0;
  background: #d6d6d6; line-height: 26px; text-align: center;
}
.tab.on { height: 36px; padding-top: 2px; border-width: 2px 2px 0; background: #f2f2f2; line-height: 32px; }
.w62 { width: 62px; padding-left: 12px; }
.w73 { width: 73px; padding-left: 2px; }
.w107 { width: 107px; padding-right: 8px; }
.w110 { width: 110px; padding-left: 10px; text-align: left; }
.w135 { width: 135px; padding-left: 12px; text-align: left; }
.w144 { width: 144px; padding-left: 19px; text-align: left; }
.w150 { width: 150px; padding-left: 16px; text-align: left; }
.w174 { width: 174px; padding-left: 20px; text-align: left; }
.back-tabs { margin: 3px 0 0 4px; }

.tree-area { height: 716px; margin: 0 17px 0 6px; background: #e6e6e6; overflow: hidden; }
.tree { width: 100%; border-collapse: collapse; table-layout: fixed; }
.tree th { height: 35px; padding: 0; background: linear-gradient(#dde2e5, #e7ebee); font-weight: 400; text-align: left; }
.tree td { height: 32px; padding: 0; vertical-align: top; }
.tree tbody tr:nth-child(even) td { height: 31px; }
.tree th.c-tree { width: 187px; padding-left: 86px; }
.tree th.c-scrap { width: 64px; padding-left: 7px; background: #e6e6e6; }
.tree td.c-scrap { overflow: hidden; }
.hit { background: #fddb80; }
.node { display: flex; height: 31px; }
.guide { flex: none; width: 29px; }
.guide.line, .twig { background: repeating-linear-gradient(#909090 0 2px, transparent 2px 4px) 7px 0 / 2px 100% no-repeat; }
.twig { display: flex; flex: none; align-items: center; width: 26px; padding: 8px 0 0 1px; }
.twig::after { content: ""; flex: 1; border-top: 2px dotted #a0a0a0; }
.twig.bare { padding-left: 8px; }
.box { width: 17px; height: 17px; border: 2px solid #909090; background: #fff; }
.ticon { flex: none; width: 24px; height: 26px; margin-top: 6px; overflow: visible; }
.name { font: 22px/26px var(--song); white-space: pre; }
.name.sans { font: 18px/26px var(--ui); }
.red { color: #8b1414; }
.teal { color: #0c8a86; }
.navy { color: #10108c; }
.c-scrap .navy { margin-left: 34px; }

.hscroll { display: flex; height: 25px; margin: 0 17px 0 6px; border: solid #bcbcbc; border-width: 1px 1px 1px 0; background: #fff; }
.grip { width: 15px; background: #6a6a6a; }
.hscroll button { width: 25px; }
.hscroll button:last-child { border-left: 1px solid #bcbcbc; }
.thumb { flex: 1; border-left: 2px solid #b0b0b0; background: #dcdcdc; }
.rest { width: 120px; }

.bar { display: flex; gap: 11px; }
.back-bar { margin: 8px 10px 0 14px; }
.front-bar { margin: 25px 10px 26px 15px; }
.gold {
  flex: none; height: 35px; border: 2px solid #8c8772; background: linear-gradient(#f6e4ae, #f5d877 45%, #efcb55);
  text-align: center; line-height: 29px;
}
.gold u { text-underline-offset: 3px; }
.gold.prime {
  margin-right: 3px;
  background: linear-gradient(#fbc93c, #f08c14) 0 0 / 18px 100% no-repeat, linear-gradient(#f6e4ae, #f5d877 45%, #efcb55);
}
.angle { flex: none; align-self: flex-end; width: 27px; height: 17px; margin-left: auto; }

.peek { position: absolute; left: 0; border: solid #b8b8b8; border-width: 0 2px 2px 0; background: #f6f6f6; }
.peek-a { z-index: 1; bottom: 10px; width: 528px; height: 60px; box-shadow: inset 0 0 0 4px #fff; }
.peek-b { bottom: 0; width: 235px; height: 40px; padding: 33px 5px 0; border-bottom: 0; }
.peek-b span { display: block; height: 6px; background: #a9a9a9; }

.front {
  position: absolute; z-index: 3; top: 24px; right: 82px; left: 228px;
  border: 2px solid #b0b0b0; box-shadow: inset 0 0 0 3px #fff; padding: 3px;
}
.front-title {
  display: flex; align-items: center; height: 41px; padding: 0 8px 0 14px;
  border-bottom: 6px solid #fdb813; background: linear-gradient(#bcbcbc, #929292);
}
.top-tabs { margin: 2px 0 0 6px; }
.low-tabs { margin: 15px 0 0 15px; }
.head-form { display: flex; gap: 19px; margin: 10px 0 0 28px; }
.col-left { width: 608px; }
.row { display: flex; height: 29px; }
.row label, .plain-label {
  display: flex; flex: none; justify-content: space-between; align-items: center;
  width: 200px; height: 28px; border-bottom: 1px solid #c6c6c6;
}
.plain-label { border-bottom-color: transparent; }
.row label.latin { font-family: var(--humanist); font-size: 17px; }
.col-right .row label { width: 202px; }
.row label.code-label { width: 124px; margin-left: 69px; }
.link { width: 22px; height: 18px; margin-right: 1px; fill: #f8dc50; stroke: #d0a83c; stroke-width: 1; }
.field {
  min-width: 0; width: 100%; height: 27px; margin: 0; padding: 0 1px; border: 1px solid #aeb3b5; border-radius: 0;
  outline: 0; background: #fff; color: #14143c; font: 18px/24px var(--ui); resize: none; appearance: none;
}
.quick { flex: none; width: 183px; height: 30px; margin-left: -4px; }
.gray { background: #e6e6e6; }
.split { background: linear-gradient(to right, #e6e6e6 calc(100% - 31px), #f2f2f2 0); }
.num { padding-right: 1px; text-align: right; }
.wide { flex: 1; }
.pos { width: 76px; }
.qty { width: 241px; }
.unit { margin-left: 14px; }
.active { background: #ffed9c; color: #222; }
.caret { position: relative; flex: 1; }
.caret::before { content: ""; position: absolute; top: 2px; left: 1px; width: 2px; height: 22px; background: #14147c; }
.combo { position: relative; flex: 1; min-width: 0; }
.combo::after {
  content: ""; position: absolute; top: 10px; right: 6px; border: solid transparent;
  border-width: 9px 9px 0; border-top-color: #111; pointer-events: none;
}
.combo.shade .field { background: linear-gradient(to right, #e6e6e6 calc(100% - 30px), #fff 0); }
.list {
  flex: none; width: 22px; height: 22px; margin: 2px 1px 0 7px; border: 2px solid #bcc6dc; border-radius: 50%;
  background: repeating-linear-gradient(#98a4bc 0 1px, transparent 1px 3px) center / 8px 10px no-repeat, #e9eef8;
}
.col-right .combo, .col-right .field { flex: none; width: 220px; }
.list.near { margin-left: 5px; }

.panel {
  display: flex; gap: 55px; margin: 1px 27px 0 16px; padding: 19px 0 55px 5px;
  border: 1px solid #d8e0e6; border-radius: 5px; box-shadow: inset 1px 1px 0 #fff;
}
.tall { height: 57px; }
.row.tall label { align-items: flex-start; height: 55px; padding-top: 2px; }
.tall .field { flex: 1; height: 54px; }
.flags { padding-top: 28px; }
.flags .row label, .plain-label { width: 201px; }
.tick { flex: none; width: 25px; height: 27px; margin-right: 10px; background: #fbfbfb; }
.tick input {
  display: block; width: 20px; height: 20px; margin: 1px 0 0; border: 2px solid #808080; background: #fff; appearance: none;
}
.tick input:checked::before {
  content: ""; display: block; width: 6px; height: 12px; margin: 0 0 0 5px; border: solid #222; border-width: 0 3px 3px 0;
  transform: rotate(40deg);
}
.w184 { flex: none; width: 184px; margin-right: 17px; }
.w149 { width: 149px; }
.done { color: #222; }
.recent { width: 220px; }

.status {
  display: grid; grid-template-columns: 763fr 141fr 381fr 377fr 204fr; gap: 6px; padding: 8px 0 6px 8px;
  border-top: 1px solid #c4c4c4; background: linear-gradient(#fff 3px, #d6d6d6 3px, #fff 18px, #fcfcfc);
}
.cells { display: grid; gap: 8px; padding-top: 3px; }
.cells i { height: 22px; border: 1px solid #b4b8b8; border-radius: 3px; background: #e6e6e6; }
.clock { display: flex; flex-direction: column; margin: -4px 0; line-height: 31px; text-align: center; }
.brand { display: flex; align-items: center; padding: 0 3px 0 31px; }
.brand strong { color: #999; font: 800 36px/40px "Open Sans", sans-serif; }
.sub { display: flex; flex-direction: column; margin-left: 3px; color: #a5a5a5; font: 15px/16px "Open Sans", sans-serif; }
.sub b { color: #f0ab1e; font: 700 24px/20px "Open Sans", sans-serif; }
.resize { align-self: flex-end; width: 20px; height: 20px; margin-left: auto; }

.taskbar { display: flex; align-items: stretch; height: 56px; border: 1px solid #4f5a60; }
.task { display: flex; align-items: center; }
.start { padding-left: 12px; }
.start svg { width: 44px; height: 44px; }
.server { padding-left: 32px; }
.server svg, .explorer svg { width: 48px; height: 46px; }
.explorer { padding-left: 39px; }
.current {
  justify-content: center; width: 84px; margin: -1px 0 -1px 19px; border: 1px solid #2c3c48;
  background: radial-gradient(at 50% 100%, #dce8f2, #9cc0da 70%);
}
.current svg { width: 46px; height: 48px; }
.tray { display: flex; align-items: center; gap: 12px; margin-left: auto; padding-right: 22px; }
.tray svg { width: 24px; height: 26px; }
.tray .up { width: 12px; height: 6px; margin-right: 13px; }
.ime { color: #fff; -webkit-text-stroke: 3px #2f6c86; paint-order: stroke; font: 24px/36px "Noto Sans CJK SC", sans-serif; }
.now { display: flex; flex-direction: column; margin-left: 8px; color: #0c1c24; font: 20px/25px "Noto Sans", sans-serif; text-align: center; }
</style>
